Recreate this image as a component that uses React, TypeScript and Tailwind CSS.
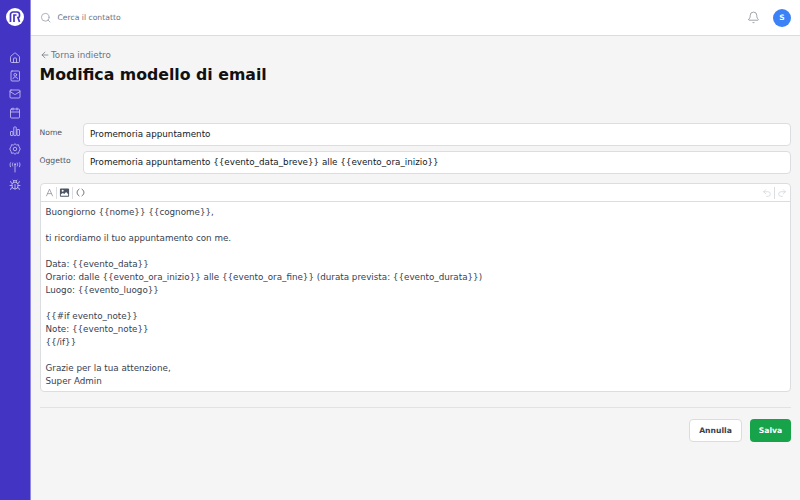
import { ArrowLeft, Bell, Bug, Calendar, Home, Mail, Redo2, Search, Undo2 } from "lucide-react";
import type { SVGProps } from "react";

type IconProps = SVGProps<SVGSVGElement>;

function ContactBook(props: IconProps) {
  return (
    <svg viewBox="0 0 24 24" fill="none" stroke="currentColor" strokeWidth="1.800" strokeLinecap="round" strokeLinejoin="round" {...props}>
      <rect x="4" y="2" width="17" height="20" rx="2" />
      <circle cx="12.500" cy="9.500" r="2.700" />
      <path d="M8 17.500c.5-2.500 2.200-3.500 4.500-3.500s4 1 4.500 3.500" />
    </svg>
  );
}

function Bars(props: IconProps) {
  return (
    <svg viewBox="0 0 24 24" fill="none" stroke="currentColor" strokeWidth="1.800" strokeLinejoin="round" {...props}>
      <rect x="3" y="13" width="5" height="8" rx="1" />
      <rect x="9.500" y="4" width="5" height="17" rx="1" />
      <rect x="16" y="9" width="5" height="12" rx="1" />
    </svg>
  );
}

function Cog(props: IconProps) {
  return (
    <svg viewBox="0 0 24 24" fill="none" stroke="currentColor" strokeWidth="1.900" strokeLinejoin="round" {...props}>
      <path d="M12 1.500 15 4l4-.5 1 3.800 2.500 4.700-2.500 4.700-1 3.800-4-.5-3 2.500L9 20l-4 .5-1-3.800L1.500 12 4 7.300l1-3.800 4 .5z" />
      <circle cx="12" cy="12" r="3.500" />
    </svg>
  );
}

function Antenna(props: IconProps) {
  return (
    <svg viewBox="0 0 24 24" fill="none" stroke="currentColor" strokeWidth="1.800" strokeLinecap="round" {...props}>
      <path d="M12 8v14" />
      <circle cx="12" cy="6.500" r="1.200" />
      <path d="M7.500 4c-1 2-1 4 0 6M16.500 4c1 2 1 4 0 6M3 3.500c-1.300 2.500-1.300 5.500 0 8M21 3.500c1.300 2.500 1.300 5.500 0 8" />
    </svg>
  );
}

function ImageFilled(props: IconProps) {
  return (
    <svg viewBox="0 0 24 24" {...props}>
      <path
        fill="currentColor"
        fillRule="evenodd"
        d="M4 3h16a2 2 0 0 1 2 2v14a2 2 0 0 1-2 2H4a2 2 0 0 1-2-2V5a2 2 0 0 1 2-2zm0 13v3h16v-3l-4.500-5-4 4.500-3-2.500zm4-10a2.200 2.200 0 1 0 0 4.400A2.200 2.200 0 0 0 8 6z"
      />
    </svg>
  );
}

function LetterA(props: IconProps) {
  return (
    <svg viewBox="0 0 24 24" fill="none" stroke="currentColor" strokeWidth="2" strokeLinecap="round" strokeLinejoin="round" {...props}>
      <path d="M4 21 12 3l8 18M7 15h10" />
    </svg>
  );
}

function CodeBrackets(props: IconProps) {
  return (
    <svg viewBox="0 0 24 24" fill="none" stroke="currentColor" strokeWidth="2.400" strokeLinecap="round" strokeLinejoin="round" {...props}>
      <path d="M8 3C5.500 5 3 8 3 12s2.500 7 5 9M16 3c2.500 2 5 5 5 9s-2.500 7-5 9" />
    </svg>
  );
}

const navIcons = [Home, ContactBook, Mail, Calendar, Bars, Cog, Antenna, Bug];

const body = [
  "Buongiorno {{nome}} {{cognome}},",
  "",
  "ti ricordiamo il tuo appuntamento con me.",
  "",
  "Data: {{evento_data}}",
  "Orario: dalle {{evento_ora_inizio}} alle {{evento_ora_fine}} (durata prevista: {{evento_durata}})",
  "Luogo: {{evento_luogo}}",
  "",
  "{{#if evento_note}}",
  "Note: {{evento_note}}",
  "{{/if}}",
  "",
  "Grazie per la tua attenzione,",
  "Super Admin",
];

function Field({ label, value }: { label: string; value: string }) {
  return (
    <div className="flex items-start">
      <label className="w-[43.500px] pt-[2.500px] text-[7.650px] leading-[14px] text-[#4b5563]">{label}</label>
      <div className="flex h-[23px] flex-1 items-center rounded-[4px] border border-[#dcdde0] bg-white pl-[6px] text-[8.750px] text-[#111827]">
        {value}
      </div>
    </div>
  );
}

export default function App() {
  return (
    <div className="flex h-[500px] w-[800px] overflow-hidden bg-[#f5f5f5] font-['DejaVu_Sans',sans-serif]">
      <aside className="flex w-[31px] flex-none flex-col items-center border-r border-[#8f86dd] bg-[#4434c4]">
        <div className="mt-[8px] flex h-[18px] w-[18px] items-center justify-center rounded-full bg-white">
          <svg viewBox="0 0 18 18" className="h-[18px] w-[18px]" fill="none" stroke="#4434c4" strokeWidth="1.700">
            <path d="M4.500 14V6.500A2.500 2.500 0 0 1 7 4h4a2.500 2.500 0 0 1 2.500 2.500V8A1.500 1.500 0 0 1 12 9.500L13.500 14" />
            <path d="M8 14V7h2.500" />
          </svg>
        </div>
        <nav className="mt-[26px] flex flex-col items-center gap-[6.200px]">
          {navIcons.map((Icon, i) => (
            <Icon key={i} className="h-[12px] w-[12px] text-[#c7c2f0]" strokeWidth={1.7} />
          ))}
        </nav>
      </aside>

      <div className="flex min-w-0 flex-1 flex-col">
        <header className="flex h-[36px] flex-none items-center border-b border-[#dcdcdc] bg-white pl-[8.500px] pr-[9px]">
          <Search className="h-[11.500px] w-[11.500px] text-[#9ca3af]" strokeWidth={1.750} />
          <span className="ml-[6.500px] text-[7.650px] text-[#6b7280]">Cerca il contatto</span>
          <Bell className="ml-auto h-[13px] w-[13px] text-[#8a8f98]" strokeWidth={1.500} />
          <div className="ml-[13px] flex h-[18px] w-[18px] items-center justify-center rounded-full bg-[#3b82f6] text-[7.500px] font-bold text-white">
            S
          </div>
        </header>

        <main className="flex flex-1 flex-col pl-[8.500px] pr-[9px]">
          <div className="mt-[13px] flex items-center text-[8.750px] leading-[12px] text-[#6b7280]">
            <ArrowLeft className="mr-[1.500px] h-[10px] w-[10px]" strokeWidth={1.750} />
            Torna indietro
          </div>
          <h1 className="mt-[2px] text-[15.750px] font-bold leading-[24px] text-[#111111]">Modifica modello di email</h1>

          <div className="mt-[36px] flex flex-col gap-[5px]">
            <Field label="Nome" value="Promemoria appuntamento" />
            <Field label="Oggetto" value="Promemoria appuntamento {{evento_data_breve}} alle {{evento_ora_inizio}}" />
          </div>

          <div className="mt-[9px] overflow-hidden rounded-[4px] border border-[#dcdde0] bg-white">
            <div className="flex h-[18px] items-center border-b border-[#dcdde0] px-[3px]">
              <LetterA className="ml-px h-[9px] w-[9px] text-[#8a8f98]" />
              <span className="mx-[2px] h-[12px] w-px bg-[#dcdde0]" />
              <ImageFilled className="h-[11px] w-[11px] text-[#4b5563]" />
              <span className="mx-[2px] h-[12px] w-px bg-[#dcdde0]" />
              <CodeBrackets className="ml-px h-[9px] w-[9px] text-[#4b5563]" />
              <Undo2 className="ml-auto h-[10px] w-[10px] text-[#d1d3d8]" strokeWidth={1.750} />
              <span className="mx-[2px] h-[12px] w-px bg-[#dcdde0]" />
              <Redo2 className="h-[10px] w-[10px] text-[#d1d3d8]" strokeWidth={1.750} />
            </div>
            <div className="h-[189px] px-[5px] pt-[3.500px] text-[8.750px] leading-[13px] text-[#374151]">
              {body.map((line, i) => (
                <div key={i} className="h-[13px] whitespace-pre">{line}</div>
              ))}
            </div>
          </div>

          <div className="mt-[15px] border-t border-[#e2e2e2]" />
          <div className="mt-[11px] flex justify-end gap-[8px]">
            <button className="h-[23px] w-[53px] rounded-[4px] border border-[#dcdcdc] bg-white text-[7.650px] font-bold text-[#374151]">
              Annulla
            </button>
            <button className="h-[23px] w-[41px] rounded-[4px] bg-[#16a34a] text-[7.650px] font-bold text-white">Salva</button>
          </div>
        </main>
      </div>
    </div>
  );
}
